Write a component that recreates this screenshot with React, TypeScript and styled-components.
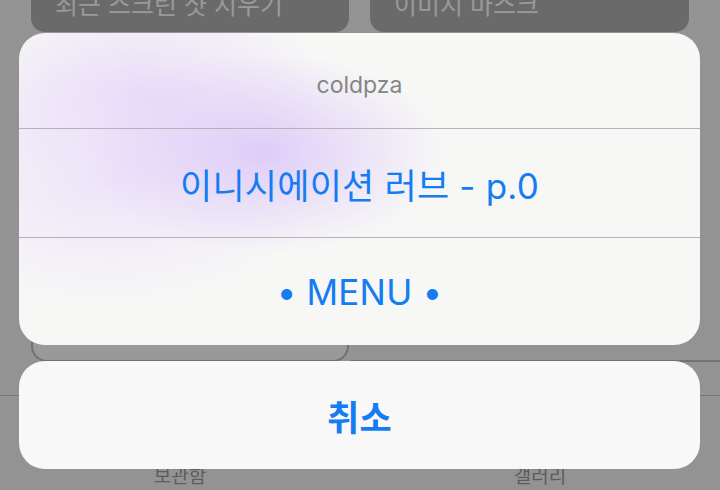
import styled, { createGlobalStyle } from 'styled-components';

const GlobalStyle = createGlobalStyle`
    html, body {
        margin: 0;
        padding: 0;
        background: #939393;
    }
    * { box-sizing: border-box; }
`;

const BLUE = '#157cf2';
const KR = `Inter, "Noto Sans CJK KR", sans-serif`;

const Screen = styled.div`
    position: relative;
    width: 720px;
    height: 490px;
    overflow: hidden;
    background: #939393;
    font-family: ${KR};
`;

const Behind = styled.div`
    display: flex;
    flex-direction: column;
    height: 100%;
`;

const CardRow = styled.div<{ $mt: number; $h: number }>`
    display: grid;
    grid-template-columns: 318px 1fr;
    gap: 21px;
    padding-left: 31px;
    padding-right: 31px;
    margin-top: ${p => p.$mt}px;
    height: ${p => p.$h}px;
`;

const DimCard = styled.div`
    background: #6a6a6b;
    border-radius: 14px;
    display: flex;
    align-items: flex-end;
    padding: 0 24px 14px;
    color: #9a9a9a;
    font-size: 25px;
    line-height: 1;
    white-space: nowrap;
`;

const OutlineCard = styled.div<{ $left?: boolean }>`
    background: ${p => (p.$left ? '#999999' : 'transparent')};
    border-radius: ${p => (p.$left ? '16px' : '0')};
    border: 2px solid #727272;
    border-left-color: ${p => (p.$left ? '#727272' : 'transparent')};
    border-right-color: ${p => (p.$left ? '#727272' : 'transparent')};
    border-top-color: transparent;
    margin-right: ${p => (p.$left ? '0' : '-52px')};
    margin-left: ${p => (p.$left ? '0' : '-21px')};
`;

const TabBar = styled.div`
    margin-top: 33px;
    border-top: 1px solid #777;
    flex: 1;
    display: grid;
    grid-template-columns: 1fr 1fr;
    align-items: end;
    padding-bottom: 2px;
`;

const TabLabel = styled.div`
    text-align: center;
    color: #5c5c5c;
    font-size: 19px;
`;

const Sheet = styled.div`
    position: absolute;
    left: 19px;
    width: 681px;
    top: 33px;
    display: flex;
    flex-direction: column;
    gap: 16px;
`;

const Group = styled.div`
    border-radius: 26px;
    overflow: hidden;
    background:
        radial-gradient(ellipse 180px 100px at 245px 120px, rgba(221, 203, 248, 0.95), rgba(221, 203, 248, 0) 100%),
        radial-gradient(ellipse 190px 100px at 120px 60px, rgba(232, 218, 250, 0.9), rgba(232, 218, 250, 0) 100%),
        radial-gradient(ellipse 210px 120px at 90px 150px, rgba(236, 226, 250, 0.85), rgba(236, 226, 250, 0) 100%),
        #f7f7f6;
`;

const Plain = styled.div`
    border-radius: 26px;
    overflow: hidden;
    background: #f8f8f8;
`;

const Row = styled.div<{ $h: number; $divider?: boolean }>`
    height: ${p => p.$h}px;
    display: flex;
    align-items: center;
    justify-content: center;
    border-top: ${p => (p.$divider ? '1px solid #b5b2b8' : 'none')};
`;

const Title = styled.span`
    color: #858585;
    font-size: 23px;
    margin-top: 8px;
`;

const Action = styled.span<{ $bold?: boolean }>`
    color: ${BLUE};
    font-size: 35px;
    font-weight: ${p => (p.$bold ? 700 : 400)};
    letter-spacing: 0.2px;
`;

export default function App() {
    return (
        <Screen>
            <GlobalStyle />
            <Behind>
                <CardRow $mt={-30} $h={62}>
                    <DimCard>최근 스크린 샷 지우기</DimCard>
                    <DimCard>이미지 마스크</DimCard>
                </CardRow>
                <CardRow $mt={12} $h={318}>
                    <OutlineCard $left />
                    <OutlineCard />
                </CardRow>
                <TabBar>
                    <TabLabel>보관함</TabLabel>
                    <TabLabel>갤러리</TabLabel>
                </TabBar>
            </Behind>
            <Sheet>
                <Group>
                    <Row $h={95}><Title>coldpza</Title></Row>
                    <Row $h={109} $divider><Action>이니시에이션 러브 - p.0</Action></Row>
                    <Row $h={108} $divider><Action>• MENU •</Action></Row>
                </Group>
                <Plain>
                    <Row $h={108}><Action $bold>취소</Action></Row>
                </Plain>
            </Sheet>
        </Screen>
    );
}
